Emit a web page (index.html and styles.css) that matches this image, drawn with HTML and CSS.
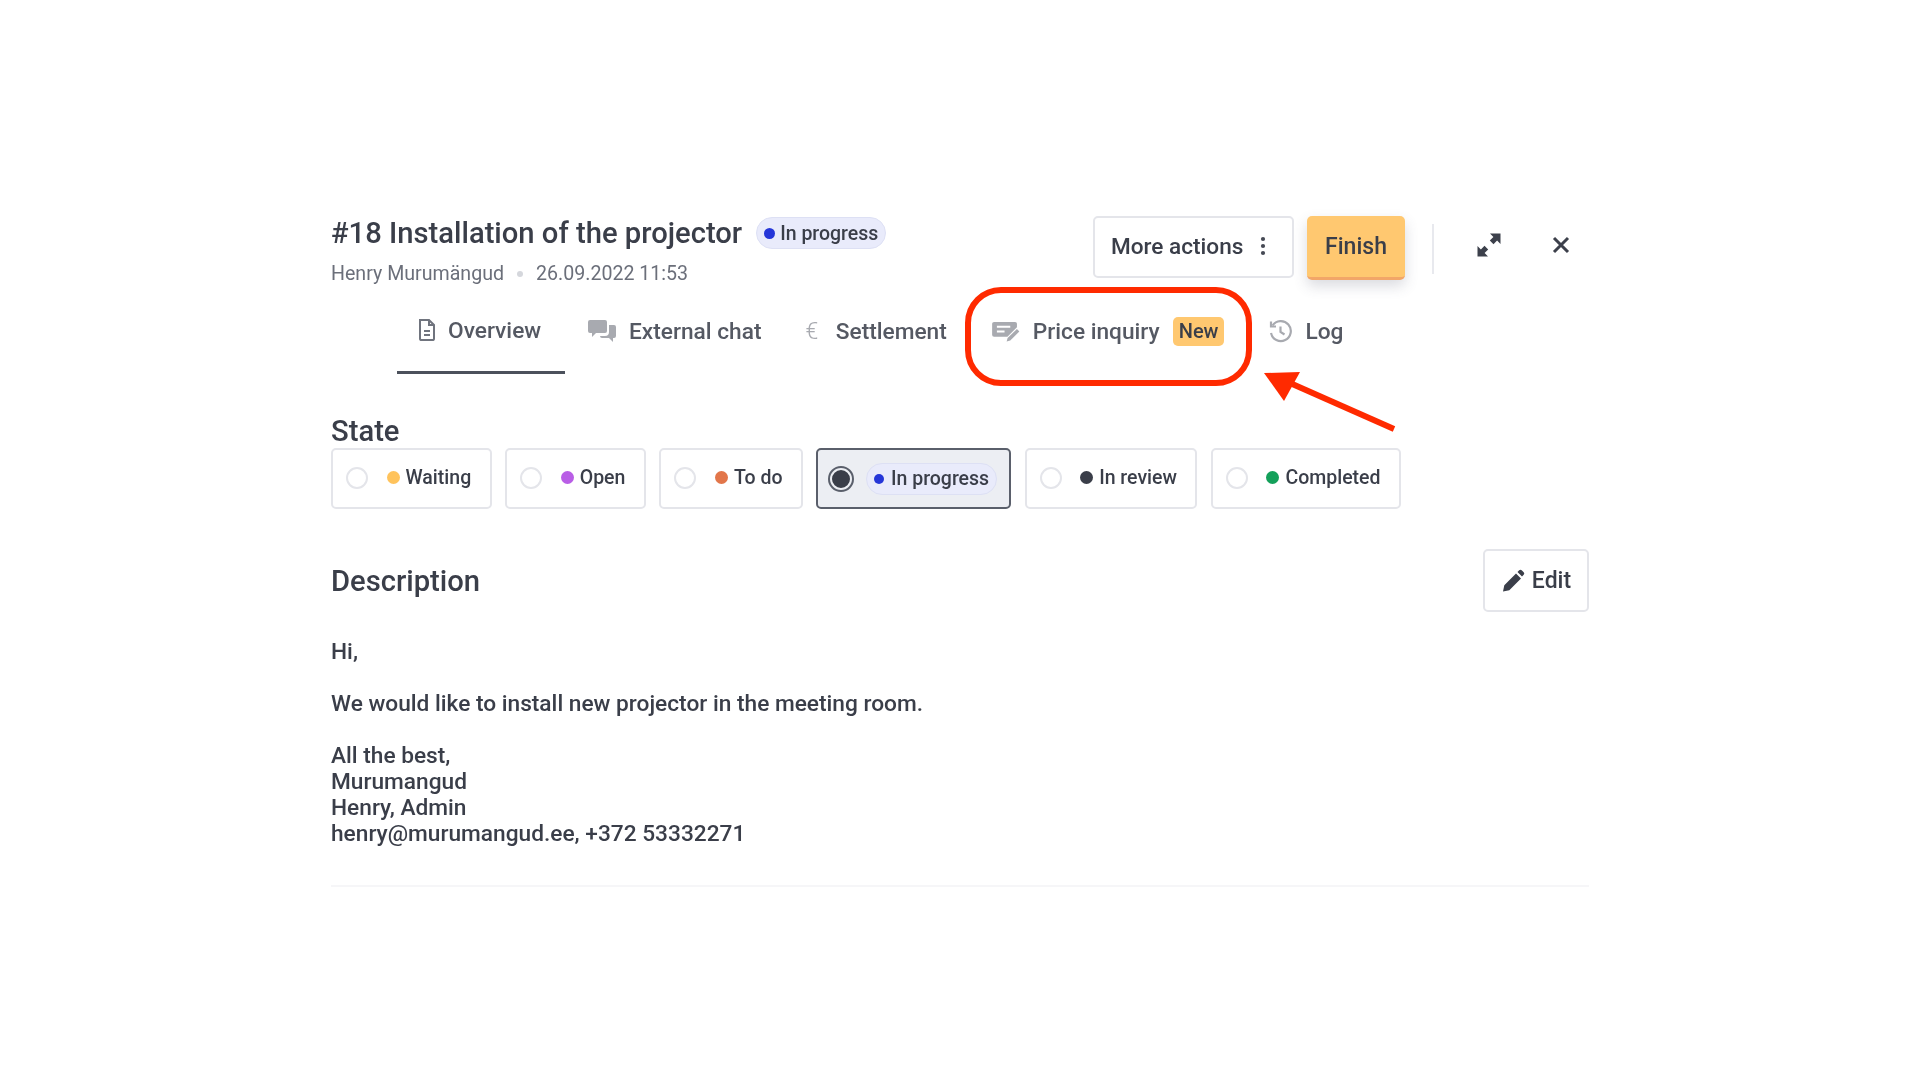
FILE: index.html
```html
<!DOCTYPE html>
<html lang="en">
<head>
    <meta charset="UTF-8">
    <meta name="viewport" content="width=device-width, initial-scale=1.0">
    <title>#18 Installation of the projector</title>
    <link rel="stylesheet" href="styles.css">
</head>
<body>
    <div class="task">
        <header class="task-head">
            <div class="task-title">
                <div class="title-row">
                    <h1>#18 Installation of the projector</h1>
                    <span class="status status-pill"><i class="dot dot-blue"></i>In progress</span>
                </div>
                <div class="meta">
                    <span>Henry Murumängud</span>
                    <i class="meta-sep"></i>
                    <span>26.09.2022 11:53</span>
                </div>
            </div>
            <div class="actions">
                <button class="btn btn-more">More actions
                    <svg class="kebab" viewBox="0 0 6 20" width="6" height="20"><circle cx="3" cy="3" r="2.1"/><circle cx="3" cy="10" r="2.1"/><circle cx="3" cy="17" r="2.1"/></svg>
                </button>
                <button class="btn btn-finish">Finish</button>
                <span class="divider"></span>
                <button class="icon-btn btn-expand" aria-label="Expand">
                    <svg viewBox="0 0 26 26" width="26" height="26"><path d="M14 1.500h10.500V12l-3.400-3.400-3.600 3.600-3.700-3.700 3.600-3.600zM12 24.500H1.500V14l3.400 3.400 3.600-3.600 3.700 3.700-3.600 3.600z"/></svg>
                </button>
                <button class="icon-btn btn-close" aria-label="Close">
                    <svg viewBox="0 0 20 20" width="20" height="20"><path d="M3 3l14 14M17 3L3 17" class="close-x"/></svg>
                </button>
            </div>
        </header>

        <nav class="tabs">
            <a class="tab tab-active">
                <svg class="tab-icon icon-doc" viewBox="0 0 20 24" width="20" height="24"><path d="M3 2h9l5 5v13.400a1.600 1.600 0 0 1-1.600 1.600H4.600A1.600 1.600 0 0 1 3 20.400z"/><path d="M12 2v5h5M7 13h6M7 17h6"/></svg>
                Overview
            </a>
            <a class="tab">
                <svg class="tab-icon" viewBox="0 0 30 24" width="30" height="24"><path d="M3 1h15a2 2 0 0 1 2 2v9a2 2 0 0 1-2 2H9l-4 4v-4H3a2 2 0 0 1-2-2V3a2 2 0 0 1 2-2z"/><path d="M22 6h5a2 2 0 0 1 2 2v9a2 2 0 0 1-2 2h-1v4l-4-4h-7a2 2 0 0 1-2-2h5a4 4 0 0 0 4-4z"/></svg>
                External chat
            </a>
            <a class="tab tab-settlement">
                <span class="euro">€</span>
                Settlement
            </a>
            <a class="tab tab-price">
                <svg class="tab-icon" viewBox="0 0 30 22" width="29" height="21"><path d="M3 1h22a2 2 0 0 1 2 2v3.500L17 16.500H3a2 2 0 0 1-2-2V3a2 2 0 0 1 2-2z"/><path d="M6 6h14M6 11h8" class="note-lines"/><path d="M27 8.500l2.500 2.500-9.500 9.500-3.800 1 1-3.800z"/></svg>
                Price inquiry
                <span class="badge-new">New</span>
            </a>
            <a class="tab tab-log">
                <svg class="tab-icon icon-log" viewBox="0 0 24 24" width="24" height="24"><path d="M4.500 6.500A10 10 0 1 1 3 14"/><path d="M3 2.500v5h5M12.500 7.500V13l4 2.500"/></svg>
                Log
            </a>
        </nav>

        <section class="state">
            <h2>State</h2>
            <div class="state-list">
                <label class="state-option"><i class="radio"></i><span class="status"><i class="dot dot-yellow"></i>Waiting</span></label>
                <label class="state-option"><i class="radio"></i><span class="status"><i class="dot dot-purple"></i>Open</span></label>
                <label class="state-option"><i class="radio"></i><span class="status"><i class="dot dot-orange"></i>To do</span></label>
                <label class="state-option state-selected"><i class="radio"></i><span class="status status-pill"><i class="dot dot-blue"></i>In progress</span></label>
                <label class="state-option"><i class="radio"></i><span class="status"><i class="dot dot-dark"></i>In review</span></label>
                <label class="state-option"><i class="radio"></i><span class="status"><i class="dot dot-green"></i>Completed</span></label>
            </div>
        </section>

        <section class="description">
            <div class="description-head">
                <h2>Description</h2>
                <button class="btn btn-edit">
                    <svg viewBox="0 0 24 24" width="24" height="24"><path d="M2 22.500l1.300-6.300L15 4.500l5 5L8.300 21.200zM16.500 3l1.700-1.700a1.800 1.800 0 0 1 2.500 0l2 2a1.800 1.800 0 0 1 0 2.500L21 7.500z"/></svg>
                    Edit
                </button>
            </div>
            <div class="description-body">
                <p>Hi,</p>
                <p>We would like to install new projector in the meeting room.</p>
                <p>All the best,<br>Murumangud<br>Henry, Admin<br>henry@murumangud.ee, +372 53332271</p>
            </div>
        </section>
        <hr class="rule">
    </div>

    <!-- annotation drawn on top of the screenshot -->
    <div class="callout"></div>
    <svg class="callout-arrow" viewBox="0 0 140 70" width="140" height="70">
        <path d="M132 58L28 12" class="arrow-line"/>
        <path d="M2 2L38 1 22 30z" class="arrow-head"/>
    </svg>
</body>
</html>
```

FILE: styles.css
```css
* {
    box-sizing: border-box;
}

body {
    font-family: 'Roboto', sans-serif;
    margin: 0;
    padding: 0;
    background: #ffffff;
    color: #3a3e49;
    height: 1080px;
    overflow: hidden;
    position: relative;
    filter: blur(0.5px);
}

.task {
    width: 1258px;
    margin-left: 331px;
    padding-top: 216px;
}

.task-head {
    display: flex;
    justify-content: space-between;
    align-items: flex-start;
}

.title-row {
    display: flex;
    align-items: center;
    gap: 14px;
}

h1 {
    margin: 0;
    font-size: 29.2px;
    line-height: 34px;
    font-weight: 500;
}

h2 {
    margin: 0;
    font-size: 29.2px;
    font-weight: 500;
}

.meta {
    display: flex;
    align-items: center;
    margin-top: 12px;
    font-size: 19.6px;
    line-height: 24px;
    color: #6b6f7a;
}

.meta-sep {
    width: 6px;
    height: 6px;
    margin: 0 13px;
    border-radius: 50%;
    background: #d5d7dc;
}

.actions {
    display: flex;
    align-items: flex-start;
    width: 496px;
}

.btn {
    display: flex;
    align-items: center;
    justify-content: center;
    font-family: inherit;
    font-weight: 500;
    color: #3a3e49;
    background: #ffffff;
    border: 2px solid #e4e5ea;
    border-radius: 5px;
}

.btn-more {
    justify-content: flex-start;
    width: 201px;
    height: 62px;
    padding: 0 0 2px 16px;
    gap: 17px;
    font-size: 22.6px;
}

.kebab {
    fill: #454954;
}

.btn-finish {
    width: 98px;
    height: 64px;
    margin-left: 13px;
    font-size: 23px;
    background: #ffc870;
    border: 0;
    border-bottom: 3px solid #f2a668;
    box-shadow: 0 6px 14px rgba(70, 75, 100, 0.2);
}

.divider {
    width: 2px;
    height: 50px;
    margin: 8px 0 0 27px;
    background: #e8e9ee;
}

.icon-btn {
    display: flex;
    align-items: center;
    justify-content: center;
    height: 58px;
    padding: 0;
    background: none;
    border: 0;
}

.btn-expand {
    width: 26px;
    margin-left: 42px;
}

.btn-close {
    width: 20px;
    margin-left: 49px;
}

.icon-btn svg {
    fill: #3c404b;
}

.close-x {
    fill: none;
    stroke: #3c404b;
    stroke-width: 3;
}

.tabs {
    display: flex;
    margin-top: 8px;
    padding-left: 66px;
    height: 80px;
}

.tab {
    display: flex;
    align-items: center;
    gap: 12px;
    height: 80px;
    padding: 0 22px 6px;
    font-size: 22.7px;
    font-weight: 500;
    color: #555963;
}

.tab-active {
    width: 168px;
    padding: 0 0 5px 20px;
    gap: 11px;
    border-bottom: 3px solid #4c515c;
}

.tab-settlement {
    gap: 17.500px;
}

.tab-price {
    gap: 13px;
}

.tab-log {
    gap: 13px;
}

.tab-icon {
    flex: none;
    fill: #a8aab0;
}

.icon-doc {
    fill: none;
    stroke: #70747e;
    stroke-width: 2;
}

.icon-log {
    fill: none;
    stroke: #a8aab0;
    stroke-width: 2.2;
}

.note-lines {
    fill: none;
    stroke: #ffffff;
    stroke-width: 2;
}

.euro {
    font-size: 23px;
    font-weight: 300;
    color: #a8aab0;
}

.badge-new {
    padding: 0 6px;
    height: 29px;
    line-height: 29px;
    font-size: 20px;
    color: #3a3e49;
    background: #ffc870;
    border-radius: 5px;
}

.state {
    margin-top: 41px;
}

.state h2 {
    line-height: 33px;
}

.state-list {
    display: flex;
    gap: 13.500px;
}

.state-option {
    display: flex;
    align-items: center;
    gap: 18.500px;
    height: 61px;
    padding: 0 18.500px 1px 13px;
    border: 2px solid #e4e5ea;
    border-radius: 5px;
}

.radio {
    flex: none;
    width: 22px;
    height: 22px;
    border: 2px solid #e4e5ea;
    border-radius: 50%;
    background: #fff;
}

.status {
    display: flex;
    align-items: center;
    gap: 6px;
    font-size: 19.500px;
    font-weight: 500;
    white-space: nowrap;
}

.state-option .status {
    margin-bottom: 2px;
}

.status-pill {
    gap: 5px;
    height: 32px;
    padding: 0 7px;
    background: #e9ebfb;
    border: 1px solid #dde0f4;
    border-radius: 16px;
}

.dot {
    flex: none;
    width: 11px;
    height: 11px;
    border-radius: 50%;
}

.state-option .dot {
    width: 13px;
    height: 13px;
}

.state-option .status-pill {
    gap: 7px;
    margin-bottom: 0;
}

.state-option .status-pill .dot {
    width: 10px;
    height: 10px;
}

.dot-yellow { background: #ffc35c; }
.dot-purple { background: #b95ee6; }
.dot-orange { background: #e2764a; }
.dot-blue { background: #2536d8; }
.dot-dark { background: #3a3e49; }
.dot-green { background: #14a05a; }

.state-selected {
    gap: 13.500px;
    padding: 0 12px 0 12px;
    background: #eceef3;
    border-color: #5a5f6b;
}

.state-selected .radio {
    background: #3a3e49;
    border: 2px solid #eceef3;
    outline: 2px solid #5a5f6b;
}

.description {
    margin-top: 40px;
}

.description-head {
    display: flex;
    justify-content: space-between;
    align-items: center;
}

.btn-edit {
    width: 106px;
    height: 63px;
    padding-left: 6px;
    gap: 7px;
    font-size: 23px;
}

.btn-edit svg {
    fill: #3a3e49;
}

.description-body {
    margin-top: 27px;
    font-size: 22.700px;
    line-height: 26px;
    font-weight: 500;
}

.description-body p {
    margin: 0 0 26px;
}

.rule {
    margin: 38px 0 0;
    border: 0;
    border-top: 2px solid #f6f6f8;
}

.callout {
    position: absolute;
    left: 965px;
    top: 287px;
    width: 287px;
    height: 99px;
    border: 6px solid #ff2a00;
    border-radius: 36px;
}

.callout-arrow {
    position: absolute;
    left: 1262px;
    top: 371px;
}

.arrow-line {
    fill: none;
    stroke: #ff2a00;
    stroke-width: 6;
}

.arrow-head {
    fill: #ff2a00;
}
```
